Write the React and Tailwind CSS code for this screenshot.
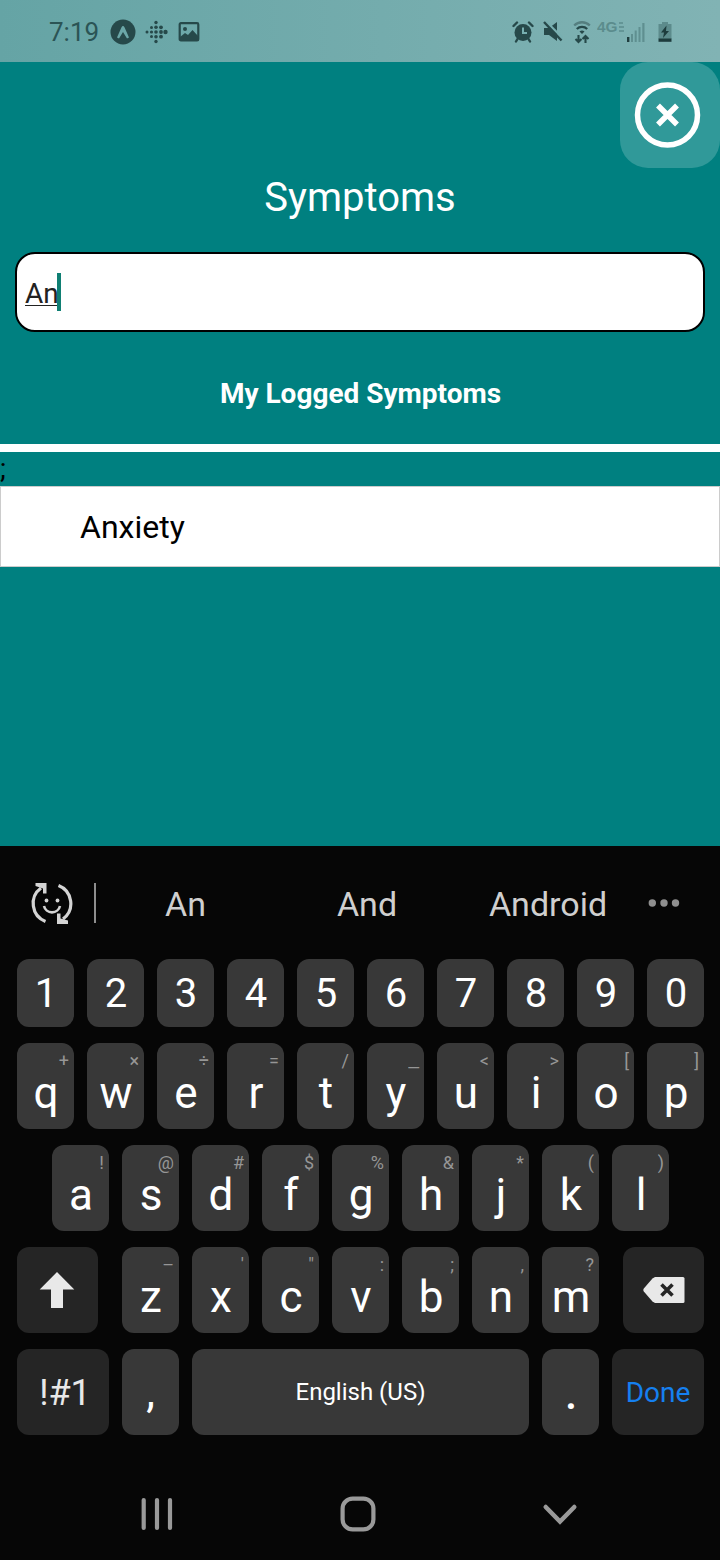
import React from "react";

const DIGITS = ["1", "2", "3", "4", "5", "6", "7", "8", "9", "0"];
const ROW_Q = [["q", "+"], ["w", "×"], ["e", "÷"], ["r", "="], ["t", "/"], ["y", "_"], ["u", "<"], ["i", ">"], ["o", "["], ["p", "]"]];
const ROW_A = [["a", "!"], ["s", "@"], ["d", "#"], ["f", "$"], ["g", "%"], ["h", "&"], ["j", "*"], ["k", "("], ["l", ")"]];
const ROW_Z = [["z", "–"], ["x", "'"], ["c", '"'], ["v", ":"], ["b", ";"], ["n", ","], ["m", "?"]];

function LetterKey({ letter, hint }) {
  return (
    <div className="flex h-[86px] w-[57px] flex-col rounded-xl bg-[#383838]">
      <span className="h-7 pr-[5px] pt-2 text-right text-[18px] font-[450] leading-5 text-[#969696]">
        {hint === "_" ? <span className="inline-block origin-right scale-x-[1.35]">_</span> : hint}
      </span>
      <span className="pl-px text-center text-[44px] font-[450] leading-[44px] text-white">{letter}</span>
    </div>
  );
}

function LetterRow({ keys }) {
  return (
    <div className="flex gap-[13px]">
      {keys.map(([letter, hint]) => (
        <LetterKey key={letter} letter={letter} hint={hint} />
      ))}
    </div>
  );
}

function StatusBar() {
  return (
    <header className="flex h-[62px] items-center bg-linear-to-r from-[#65a4a5] to-[#81b3b4] pl-[49px] pr-12 pt-px text-[#26494a]">
      <span className="w-[61px] pt-px text-[26px] leading-8 text-[#2b5455]">7:19</span>
      <svg width="26" height="26" viewBox="0 0 26 26" className="shrink-0">
        <circle cx="13" cy="13" r="12.5" fill="currentColor" />
        <path d="M7 18.5 11.4 8.4q1.6-2.6 3.2 0L19 18.5l-2 1-4-6.5-4 6.5z" fill="#6ba7a8" />
      </svg>
      <svg width="24" height="26" viewBox="0 0 24 26" className="ml-2 shrink-0" fill="currentColor">
        <circle cx="3" cy="13" r="1.5" />
        <circle cx="7.5" cy="8.5" r="1.5" /><circle cx="7.5" cy="13" r="1.6" /><circle cx="7.5" cy="17.5" r="1.5" />
        <circle cx="12" cy="3.5" r="1.7" /><circle cx="12" cy="8.3" r="1.8" /><circle cx="12" cy="13" r="1.8" /><circle cx="12" cy="17.7" r="1.8" /><circle cx="12" cy="22.5" r="1.7" />
        <circle cx="17" cy="8.3" r="1.9" /><circle cx="17" cy="13" r="1.9" /><circle cx="17" cy="17.7" r="1.9" />
        <circle cx="21.5" cy="13" r="2.2" />
      </svg>
      <svg width="22" height="20" viewBox="0 0 22 20" className="ml-[10px] shrink-0">
        <rect x="1.7" y="1.2" width="18.6" height="17.2" rx="1.2" fill="none" stroke="currentColor" strokeWidth="2.2" />
        <circle cx="7" cy="7" r="2" fill="currentColor" />
        <path d="M2 15 7 11l3 2 4.5-5 5.500 6v4H2z" fill="currentColor" />
      </svg>
      <div className="grow" />
      <svg width="22" height="22" viewBox="0 0 22 22" className="shrink-0">
        <circle cx="11" cy="11.500" r="8.5" fill="currentColor" />
        <path d="M1.500 5 5 1.500M17 1.500 20.500 5M5.500 18 4 20.500M16.500 18 18 20.500" fill="none" stroke="currentColor" strokeWidth="2.4" strokeLinecap="round" />
        <path d="M11 6.500V12h4" fill="none" stroke="#77afb0" strokeWidth="2" />
      </svg>
      <svg width="20" height="22" viewBox="0 0 20 22" className="ml-[9px] shrink-0">
        <path d="M1 7h5l8-6v19l-8-6H1z" fill="currentColor" />
        <path d="M2.500 0 21.500 19" stroke="#78afb0" strokeWidth="2.400" />
        <path d="M1 1 18.500 19.500" stroke="currentColor" strokeWidth="2.400" />
      </svg>
      <svg width="18" height="24" viewBox="0 0 18 24" className="ml-[10px] shrink-0" fill="none" stroke="currentColor">
        <path d="M1.200 5.500a11 11 0 0 1 15.600 0" stroke="#557f80" strokeWidth="2.300" />
        <path d="M3.800 9a7.500 7.500 0 0 1 10.400 0" strokeWidth="2.300" />
        <path d="M6.500 11.500a4 4 0 0 1 5 0L9 14z" fill="currentColor" stroke="none" />
        <path d="M5.500 15v6M2.500 19l3 3 3-3M12.500 23v-6M9.500 19l3-3 3 3" strokeWidth="2.100" />
      </svg>
      <span className="mb-[9px] ml-[6px] flex w-[28px] items-center text-[#5b8c8d]">
        <span className="w-[21px] origin-left scale-x-[1.1] font-['Liberation_Sans'] text-[14px] font-bold leading-4">4G</span>
        <svg width="6" height="11" viewBox="0 0 6 11" className="ml-px shrink-0">
          <path d="M0 1h4M0 5h5M0 9h5" stroke="currentColor" strokeWidth="1.500" />
        </svg>
      </span>
      <svg width="20" height="20" viewBox="0 0 20 20" className="ml-px shrink-0" fill="#5f8f90">
        <rect x="1" y="15" width="2.400" height="5" fill="#1f3d3e" />
        <rect x="5" y="12" width="2" height="8" /><rect x="8.700" y="8.500" width="2" height="11.500" /><rect x="12.500" y="5" width="2" height="15" /><rect x="16.300" y="1" width="2.200" height="19" />
      </svg>
      <svg width="14" height="22" viewBox="0 0 14 22" className="ml-[12px] shrink-0">
        <path d="M4 1h6v2h3.500v15H.5V3H4z" fill="#5c8b8c" />
        <path d="M.5 17.500h13v3.300H.5z" fill="#1d3c3d" />
        <path d="M8.500 4.500 3 11.500h3L5 17l6-7H8z" fill="#1d3c3d" />
      </svg>
    </header>
  );
}

function SuggestionBar() {
  return (
    <div className="flex h-[113px] items-center pl-[29px] pr-[39px] pt-[3px] text-[34px] leading-10 text-[#cfcfcf]">
      <svg width="44" height="44" viewBox="0 0 44 44" className="mb-px shrink-0" fill="none" stroke="#d4d4d4" strokeWidth="3.200">
        <path d="M16.500 39.500A19.300 19.300 0 0 1 12 6" />
        <path d="M29.500 3.500A19.300 19.300 0 0 1 34 37" />
        <path d="M6.500 1h11v10.500H14V6.500L6.500 4z" fill="#d4d4d4" stroke="none" />
        <path d="M39 42H28V31.500h3.500v5L39 38.500z" fill="#d4d4d4" stroke="none" />
        <path d="M15 24a8.200 8.200 0 0 0 16 0" strokeWidth="2.600" />
        <circle cx="17.500" cy="18.500" r="1.900" fill="#d4d4d4" stroke="none" />
        <circle cx="28.500" cy="18.500" r="1.900" fill="#d4d4d4" stroke="none" />
      </svg>
      <div className="mb-[2px] ml-[21px] h-10 w-[2px] bg-[#8d8d8d]" />
      <span className="w-[179px] text-center">An</span>
      <span className="w-[184px] text-center">And</span>
      <span className="w-[178px] text-center">Android</span>
      <svg width="34" height="10" viewBox="0 0 34 10" className="mb-[2px] ml-[10px] shrink-0" fill="#8f8f8f">
        <circle cx="5.300" cy="5" r="3.700" /><circle cx="17" cy="5" r="3.700" /><circle cx="28.500" cy="5" r="3.700" />
      </svg>
    </div>
  );
}

function Keyboard() {
  return (
    <section className="flex h-[714px] flex-col bg-[#060606]">
      <SuggestionBar />
      <div className="flex flex-col items-center gap-4 pl-[1px]">
        <div className="flex gap-[13px]">
          {DIGITS.map((d) => (
            <div key={d} className="flex h-[68px] w-[57px] items-center justify-center rounded-xl bg-[#383838] pl-px pt-[2px] text-[40px] font-[450] leading-[48px] text-white">{d}</div>
          ))}
        </div>
        <LetterRow keys={ROW_Q} />
        <LetterRow keys={ROW_A} />
        <div className="flex gap-6">
          <div className="flex h-[86px] w-[81px] items-center justify-center rounded-xl bg-[#252525]">
            <svg width="36" height="38" viewBox="0 0 36 38" className="-ml-px"><path d="M18 1 35.300 18.500H24V37H12V18.500H.7z" fill="#e8e8e8" /></svg>
          </div>
          <LetterRow keys={ROW_Z} />
          <div className="flex h-[86px] w-[81px] items-center justify-center rounded-xl bg-[#252525]">
            <svg width="42" height="28" viewBox="0 0 42 28">
              <path d="M12 1h28q1.500 0 1.500 1.500v23Q41.500 27 40 27H12L9.500 25.500.8 15.500q-1-1.500 0-3L9.500 2.500z" fill="#e8e8e8" />
              <path d="m18.500 8.500 11 11m0-11-11 11" stroke="#252525" strokeWidth="3.600" />
            </svg>
          </div>
        </div>
        <div className="flex gap-[13px] text-white">
          <div className="flex h-[86px] w-[92px] items-center justify-center rounded-xl bg-[#252525] pl-1 pt-[2px] text-[36px] leading-10 text-[#e8e8e8]">!#1</div>
          <div className="flex h-[86px] w-[57px] flex-col rounded-xl bg-[#383838] pt-[21px] text-center text-[44px] font-[450] leading-[44px]">,</div>
          <div className="flex h-[86px] w-[337px] items-center justify-center rounded-xl bg-[#383838] text-2xl">English (US)</div>
          <div className="flex h-[86px] w-[57px] flex-col rounded-xl bg-[#383838] pl-px pt-[23px] text-center text-[44px] font-medium leading-[44px]">.</div>
          <div className="flex h-[86px] w-[92px] items-center justify-center rounded-xl bg-[#252525] pt-[2px] text-[28px] leading-8 text-[#1580f0]">Done</div>
        </div>
      </div>
      <nav className="flex grow items-center justify-between pl-[140px] pr-[142px] pt-[33px]">
        <svg width="34" height="36" viewBox="0 0 34 36" stroke="#999999" strokeWidth="4.200" strokeLinecap="round">
          <path d="M3.700 4v28M17 4v28M30 4v28" />
        </svg>
        <svg width="36" height="36" viewBox="0 0 36 36" fill="none" stroke="#999999" strokeWidth="4.200">
          <rect x="2.600" y="2.600" width="30.800" height="30.800" rx="10" />
        </svg>
        <svg width="36" height="36" viewBox="0 0 36 36" fill="none" stroke="#999999" strokeWidth="4.500" strokeLinecap="round">
          <path d="M3.700 11 18 25.500 32.300 11" />
        </svg>
      </nav>
    </section>
  );
}

export default function App() {
  return (
    <div className="flex h-[1560px] w-[720px] flex-col overflow-hidden bg-[#008080] font-['Roboto',sans-serif]">
      <StatusBar />
      <main className="flex grow flex-col">
        <div className="flex justify-end">
          <button className="flex h-[106px] w-[100px] items-center justify-center rounded-[28px] bg-[#309999]">
            <svg width="68" height="68" viewBox="0 0 68 68" fill="none" stroke="white" strokeWidth="5.500" className="-ml-[5px]">
              <circle cx="33.500" cy="34" r="30" />
              <path d="m24 24.500 19 19m0-19-19 19" />
            </svg>
          </button>
        </div>
        <h1 className="mt-[6px] text-center text-[40px] leading-[48px] text-white">Symptoms</h1>
        <div className="mx-[15px] mt-[30px] flex h-20 items-center rounded-[20px] border-2 border-black bg-white pl-2">
          <span className="mt-[1px] h-[27px] w-[33px] border-b border-[#222] text-[28px] leading-[29px] text-[#222]">An</span>
          <span className="-ml-px h-[38px] w-1 bg-[#0f7f73]" />
        </div>
        <h2 className="mt-[42px] pl-px text-center text-[28px] font-bold leading-10 text-white">My Logged Symptoms</h2>
        <div className="mt-[30px] h-2 bg-white" />
        <div className="h-[34px] text-[28px] leading-[34px] text-black">;</div>
        <div className="flex h-[81px] items-center border border-[#cccccc] bg-white pl-[79px] text-[32px] leading-10 text-black">Anxiety</div>
      </main>
      <Keyboard />
    </div>
  );
}
